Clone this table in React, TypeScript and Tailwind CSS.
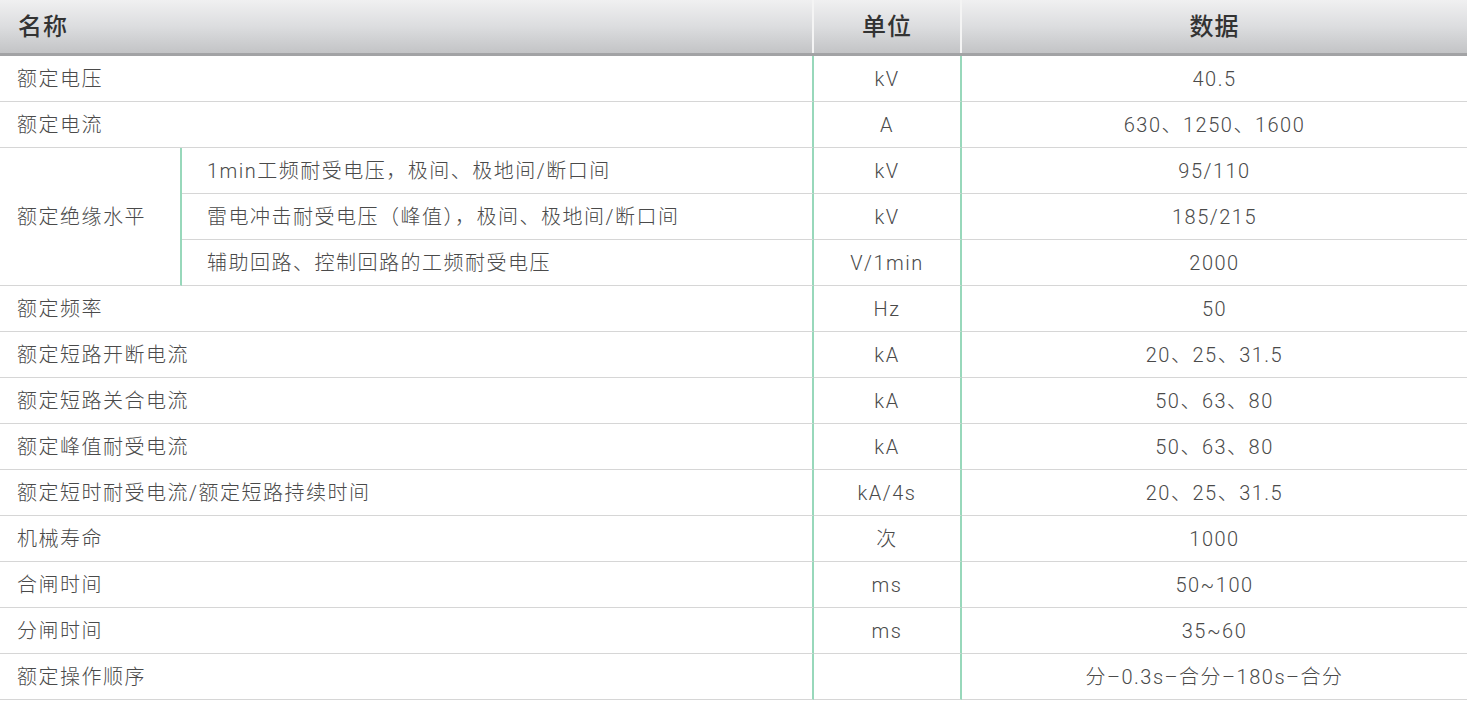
import React from "react";

const FONT = "font-['Roboto','Noto_Sans_CJK_SC',sans-serif]";

type Row = { name: string; unit: string; data: string };

const before: Row[] = [
  { name: "额定电压", unit: "kV", data: "40.5" },
  { name: "额定电流", unit: "A", data: "630、1250、1600" },
];

const group: Row[] = [
  { name: "1min工频耐受电压，极间、极地间/断口间", unit: "kV", data: "95/110" },
  { name: "雷电冲击耐受电压（峰值），极间、极地间/断口间", unit: "kV", data: "185/215" },
  { name: "辅助回路、控制回路的工频耐受电压", unit: "V/1min", data: "2000" },
];

const after: Row[] = [
  { name: "额定频率", unit: "Hz", data: "50" },
  { name: "额定短路开断电流", unit: "kA", data: "20、25、31.5" },
  { name: "额定短路关合电流", unit: "kA", data: "50、63、80" },
  { name: "额定峰值耐受电流", unit: "kA", data: "50、63、80" },
  { name: "额定短时耐受电流/额定短路持续时间", unit: "kA/4s", data: "20、25、31.5" },
  { name: "机械寿命", unit: "次", data: "1000" },
  { name: "合闸时间", unit: "ms", data: "50~100" },
  { name: "分闸时间", unit: "ms", data: "35~60" },
  { name: "额定操作顺序", unit: "", data: "分–0.3s–合分–180s–合分" },
];

const cellB = "border-b-[1.5px] border-[#d6d6d6] flex items-center pt-[1px]";
const green = "border-r-2 border-r-[#98d8bb]";

function SimpleRow({ r }: { r: Row }) {
  return (
    <>
      <div className={`col-span-2 ${cellB} ${green} pl-[17px]`}>{r.name}</div>
      <div className={`${cellB} ${green} justify-center`}>{r.unit}</div>
      <div className={`${cellB} justify-center`}>{r.data}</div>
    </>
  );
}

export default function App() {
  return (
    <div className={`w-[1467px] h-[701px] bg-white ${FONT}`}>
      <div className="grid grid-cols-[814px_148px_505px] h-[56px] bg-gradient-to-b from-[#f0f0f1] via-[#dcdddf] to-[#c3c4c6] border-b-[3px] border-[#a2a3a5] text-[24px] tracking-[1px] font-medium text-[#333333]">
        <div className="flex items-center pl-[18px] border-r-2 border-r-[#f4f4f4]">名称</div>
        <div className="flex items-center justify-center border-r-2 border-r-[#f4f4f4]">单位</div>
        <div className="flex items-center justify-center">数据</div>
      </div>
      <div className="grid grid-cols-[182px_632px_148px_505px] auto-rows-[46px] text-[20px] tracking-[1.5px] font-light text-[#4a4a4a]">
        {before.map((r) => (
          <SimpleRow key={r.name} r={r} />
        ))}
        <div className={`row-span-3 ${cellB} ${green} pl-[17px]`}>额定绝缘水平</div>
        {group.map((r) => (
          <React.Fragment key={r.name}>
            <div className={`${cellB} ${green} pl-[25px]`}>{r.name}</div>
            <div className={`${cellB} ${green} justify-center`}>{r.unit}</div>
            <div className={`${cellB} justify-center`}>{r.data}</div>
          </React.Fragment>
        ))}
        {after.map((r) => (
          <SimpleRow key={r.name} r={r} />
        ))}
      </div>
    </div>
  );
}
